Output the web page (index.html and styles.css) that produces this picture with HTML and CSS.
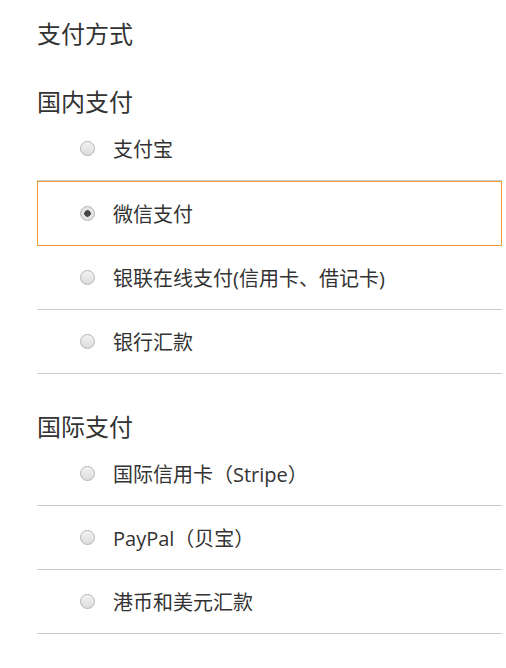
FILE: index.html
```html
<!DOCTYPE html>
<html lang="zh-CN">
<head>
  <meta charset="UTF-8">
  <title>支付方式</title>
  <link rel="stylesheet" href="styles.css">
</head>
<body>
  <div class="payment">
    <h1 class="title">支付方式</h1>

    <h2 class="group">国内支付</h2>
    <ul class="methods">
      <li class="method">
        <label><input type="radio" name="pay" value="alipay"><span>支付宝</span></label>
      </li>
      <li class="method selected">
        <label><input type="radio" name="pay" value="wechat" checked><span>微信支付</span></label>
      </li>
      <li class="method">
        <label><input type="radio" name="pay" value="unionpay"><span>银联在线支付(信用卡、借记卡)</span></label>
      </li>
      <li class="method">
        <label><input type="radio" name="pay" value="bank"><span>银行汇款</span></label>
      </li>
    </ul>

    <h2 class="group">国际支付</h2>
    <ul class="methods">
      <li class="method">
        <label><input type="radio" name="pay" value="stripe"><span>国际信用卡（Stripe）</span></label>
      </li>
      <li class="method">
        <label><input type="radio" name="pay" value="paypal"><span>PayPal（贝宝）</span></label>
      </li>
      <li class="method">
        <label><input type="radio" name="pay" value="transfer"><span>港币和美元汇款</span></label>
      </li>
    </ul>
  </div>
</body>
</html>
```

FILE: styles.css
```css
* {
  box-sizing: border-box;
}

body {
  margin: 0;
  background-color: #ffffff;
  color: #333333;
  font-family: "Open Sans", "Noto Sans CJK SC", sans-serif;
}

.payment {
  width: 502px;
  padding: 16px 0 0 37px;
}

.title {
  margin: 0;
  font-size: 24px;
  font-weight: normal;
  line-height: 36px;
}

.group {
  margin: 35px 0 0;
  font-size: 24px;
  font-weight: normal;
  line-height: 30px;
}

.methods {
  list-style: none;
  margin: 0;
  padding: 0;
}

.method {
  height: 64px;
  border-bottom: 1px solid #cccccc;
}

.method label {
  display: flex;
  align-items: center;
  height: 100%;
  padding-left: 43px;
  font-size: 20px;
  cursor: pointer;
}

.method.selected {
  height: 65px;
  border: 1px solid #f39a3a;
}

.method.selected label {
  padding-left: 42px;
}

.method input {
  appearance: none;
  -webkit-appearance: none;
  width: 15px;
  height: 15px;
  margin: 0 18px 0 0;
  border: 1px solid #b4b4b4;
  border-radius: 50%;
  background: linear-gradient(#f2f2f2, #dcdcdc);
  flex-shrink: 0;
}

.method input:checked {
  background: radial-gradient(circle, #474747 0, #474747 3px, #e6e6e6 3.5px, #dedede 100%);
}

.methods + .group {
  margin-top: 38px;
}
```
